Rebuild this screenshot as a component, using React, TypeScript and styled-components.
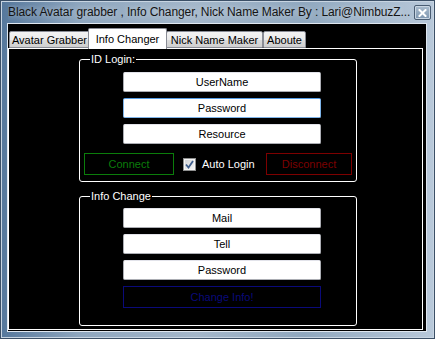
import styled, { createGlobalStyle } from 'styled-components';

const GlobalStyle = createGlobalStyle`
  html, body {
    margin: 0;
    padding: 0;
    background: #000;
  }
  * {
    box-sizing: border-box;
  }
`;

const Window = styled('div')`
  width: 435px;
  height: 339px;
  display: flex;
  flex-direction: column;
  padding: 0 8px 7px 7px;
  font-family: 'Liberation Sans', Arial, sans-serif;
  font-size: 11px;
  background: linear-gradient(
    to right,
    #55779b 0%,
    #8ea6be 18%,
    #a4b7ca 45%,
    #90a8bf 70%,
    #b9c9da 100%
  );
  box-shadow: inset 0 0 0 1px #3b4f66, inset 0 0 0 2px #c8d5e2;
`;

const TitleBar = styled('div')`
  flex-shrink: 0;
  height: 23px;
  display: flex;
  align-items: flex-start;
  padding-left: 1px;
`;

const Caption = styled('span')`
  flex: 1;
  min-width: 0;
  overflow: hidden;
  margin-top: 5px;
  color: #141414;
  font-size: 12px;
  letter-spacing: -0.1px;
  line-height: 15px;
  white-space: nowrap;
  text-shadow: 0 0 6px rgba(255, 255, 255, 0.6);
`;

const CloseButton = styled('div')`
  flex-shrink: 0;
  width: 17px;
  height: 15px;
  margin-top: 5px;
  margin-right: -4px;
  border: 1px solid #4a5d73;
  border-radius: 2px;
  box-shadow: inset 0 0 0 1px #c9d6e3;
  background: linear-gradient(#a9bbcd, #7f97b0);
  display: flex;
  align-items: center;
  justify-content: center;
`;

const Client = styled('div')`
  flex: 1;
  min-height: 0;
  display: flex;
  flex-direction: column;
  background: #000;
  border: 1px solid #dfe7f0;
  padding: 4px 3px 1px 0;
`;

const TabStrip = styled('div')`
  flex-shrink: 0;
  display: flex;
  align-items: flex-end;
  height: 20px;
  padding-left: 1px;
  position: relative;
  z-index: 1;
`;

const Tab = styled('div')<{ $active?: boolean; $width: number }>`
  width: ${(p) => p.$width}px;
  height: ${(p) => (p.$active ? '21px' : '17px')};
  margin: ${(p) => (p.$active ? '0 -1px -1px -2px' : '0')};
  padding-top: ${(p) => (p.$active ? '3px' : '1px')};
  border: 1px solid #898c95;
  border-bottom: ${(p) => (p.$active ? 'none' : '1px solid #898c95')};
  border-radius: 2px 2px 0 0;
  background: ${(p) =>
    p.$active ? '#fff' : 'linear-gradient(#f3f3f3 0%, #ebebeb 50%, #dcdcdc 51%, #cfcfcf 100%)'};
  color: #000;
  font-size: 11px;
  line-height: 14px;
  text-align: center;
  white-space: nowrap;
  z-index: ${(p) => (p.$active ? 2 : 1)};
`;

const TabPage = styled('div')`
  flex: 1;
  min-height: 0;
  border: 1px solid #fff;
  padding: 3px 0 0 70px;
  display: flex;
  flex-direction: column;
  gap: 7px;
`;

const GroupBox = styled('fieldset')`
  margin: 0;
  padding: 0 4px;
  width: 278px;
  min-width: 0;
  border: 1px solid #fff;
  border-radius: 3px;
  display: flex;
  flex-direction: column;
`;

const Legend = styled('legend')`
  margin-left: 6px;
  padding: 0 1px;
  color: #fff;
  font-size: 11px;
  line-height: 14px;
`;

const Fields = styled('div')<{ $top: number }>`
  width: 198px;
  margin-left: 39px;
  display: flex;
  flex-direction: column;
  gap: 6px;
  margin-top: ${(p) => p.$top}px;
`;

const TextBox = styled('input')<{ $focused?: boolean }>`
  height: 20px;
  width: 100%;
  margin: 0;
  padding: 0 2px;
  border: 1px solid ${(p) => (p.$focused ? '#7eb4ea' : '#abadb3')};
  border-top-color: ${(p) => (p.$focused ? '#569de5' : '#e2e3ea')};
  border-radius: 2px;
  background: #fff;
  color: #000;
  font-family: 'Liberation Sans', Arial, sans-serif;
  font-size: 11px;
  text-align: center;
  outline: none;
`;

const ButtonRow = styled('div')`
  display: flex;
  align-items: center;
  margin-top: 9px;
  margin-bottom: 6px;
`;

const FlatButton = styled('div')<{ $color: string; $width: number }>`
  width: ${(p) => p.$width}px;
  height: 22px;
  border: 1px solid ${(p) => p.$color};
  color: ${(p) => p.$color};
  background: #000;
  display: flex;
  align-items: center;
  justify-content: center;
  font-size: 11px;
`;

const CheckLabel = styled('label')`
  display: flex;
  align-items: center;
  gap: 6px;
  margin-left: 9px;
  margin-right: auto;
  color: #fff;
  font-size: 11px;
`;

const CheckBox = styled('span')`
  width: 13px;
  height: 13px;
  border: 1px solid #8e8f8f;
  background: linear-gradient(135deg, #cfd1d4, #f6f6f6);
  box-shadow: inset 0 0 0 1px #f4f4f4;
  display: flex;
  align-items: center;
  justify-content: center;
`;

const InfoButtonWrap = styled('div')`
  margin-bottom: 17px;
`;

const App = () => {
  return (
    <>
      <GlobalStyle />
      <Window>
        <TitleBar>
          <Caption>Black Avatar grabber , Info Changer, Nick Name Maker By : Lari@NimbuzZ...</Caption>
          <CloseButton>
            <svg width="9" height="8" viewBox="0 0 9 8">
              <path d="M1.5 1 L7.5 7 M7.5 1 L1.5 7" stroke="#fff" strokeWidth="2" strokeLinecap="square" />
            </svg>
          </CloseButton>
        </TitleBar>
        <Client>
          <TabStrip>
            <Tab $width={81}>Avatar Grabber</Tab>
            <Tab $active $width={79}>Info Changer</Tab>
            <Tab $width={97}>Nick Name Maker</Tab>
            <Tab $width={43}>Aboute</Tab>
          </TabStrip>
          <TabPage>
            <GroupBox>
              <Legend>ID Login:</Legend>
              <Fields $top={6}>
                <TextBox defaultValue="UserName" readOnly />
                <TextBox defaultValue="Password" readOnly $focused />
                <TextBox defaultValue="Resource" readOnly />
              </Fields>
              <ButtonRow>
                <FlatButton $color="#0b7d0b" $width={90}>Connect</FlatButton>
                <CheckLabel>
                  <CheckBox>
                    <svg width="9" height="9" viewBox="0 0 9 9">
                      <path d="M1 4.5 L3.5 7.5 L8 1" fill="none" stroke="#3e5d8c" strokeWidth="1.8" />
                    </svg>
                  </CheckBox>
                  Auto Login
                </CheckLabel>
                <FlatButton $color="#7d0000" $width={86}>Disconnect</FlatButton>
              </ButtonRow>
            </GroupBox>
            <GroupBox>
              <Legend>Info Change</Legend>
              <Fields $top={5}>
                <TextBox defaultValue="Mail" readOnly />
                <TextBox defaultValue="Tell" readOnly />
                <TextBox defaultValue="Password" readOnly />
                <InfoButtonWrap>
                  <FlatButton $color="#0a0a7a" $width={198}>Change Info!</FlatButton>
                </InfoButtonWrap>
              </Fields>
            </GroupBox>
          </TabPage>
        </Client>
      </Window>
    </>
  );
};

export default App;
